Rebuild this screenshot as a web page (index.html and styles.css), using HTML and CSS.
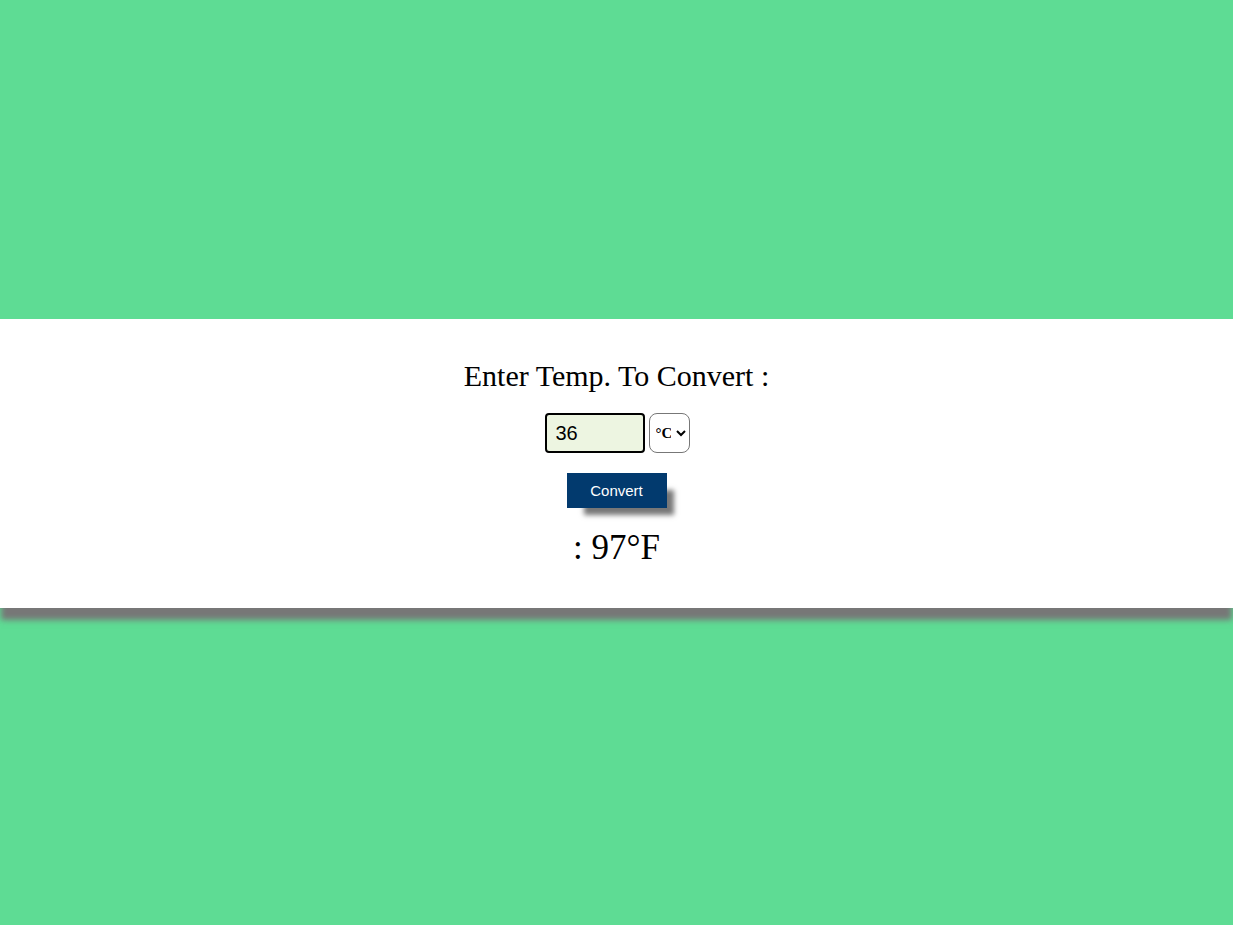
FILE: index.html
```html
<!DOCTYPE html>
<html>
<head>
<meta charset="utf-8">
<link rel="stylesheet" href="styles.css">
</head>
<body>
<section class="panel">
  <h2 class="title">Enter Temp. To Convert :</h2>
  <div class="inputs">
    <input class="temp" type="text" value="36">
    <select class="unit"><option>°C</option><option>°F</option></select>
  </div>
  <button class="btn">Convert</button>
  <div class="result">: 97°F</div>
</section>
</body>
</html>
```

FILE: styles.css
```css
html, body {
  margin: 0;
  padding: 0;
  background: #5edc94;
  height: 100%;
}
body {
  font-family: "Liberation Serif", "Times New Roman", serif;
}
.panel {
  margin-top: 319px;
  height: 289px;
  background: #fff;
  box-shadow: 0 13px 6px -1px #777;
  display: flex;
  flex-direction: column;
  align-items: center;
  box-sizing: border-box;
  padding-top: 37px;
}
.title {
  margin: 0;
  font-weight: normal;
  font-size: 30px;
  line-height: 40px;
  color: #000;
}
.inputs {
  display: flex;
  gap: 4px;
  margin-top: 17px;
  padding-left: 1px;
}
.temp {
  box-sizing: border-box;
  width: 100px;
  height: 40px;
  border: 2px solid #000;
  border-radius: 4px;
  background: #edf5e1;
  font-family: "Liberation Sans", Arial, sans-serif;
  font-size: 20px;
  padding: 0 9px;
  outline: none;
}
.unit {
  box-sizing: border-box;
  width: 41px;
  height: 40px;
  border: 1px solid #777;
  border-radius: 8px;
  background: #fff;
  font-family: "Liberation Serif", serif;
  font-weight: bold;
  font-size: 15px;
  padding: 0 2px;
}
.btn {
  margin-top: 20px;
  width: 100px;
  height: 35px;
  border: none;
  background: #023a6e;
  color: #fff;
  font-family: "Liberation Sans", Arial, sans-serif;
  font-size: 15px;
  box-shadow: 12px 12px 5px -5px #777;
}
.result {
  margin-top: 20px;
  font-size: 35px;
  line-height: 40px;
  color: #000;
}
```
